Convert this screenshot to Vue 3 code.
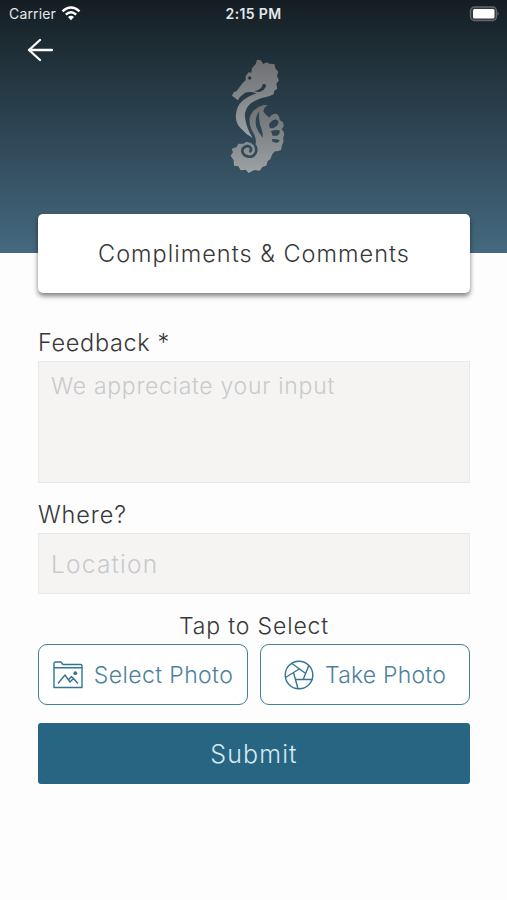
<script setup>
const fins = [
  'M162 222 Q178 203 188 211 Q195 221 181 231 Q171 237 164 233Z',
  'M168 243 Q185 238 193 241 Q198 251 186 257 L173 257Z',
  'M172 267 Q187 266 194 271 Q193 280 181 278 L171 274Z',
]
</script>

<template>
  <main class="screen">
    <header class="hero">
      <div class="status">
        <div class="carrier">
          <span>Carrier</span>
          <svg class="wifi" viewBox="0 0 20 15" aria-hidden="true">
            <path d="M1.5 5.3Q10-2.3 18.5 5.3M4.8 8.7Q10 4 15.2 8.7" />
            <path class="dot" d="M7 11Q10 8.5 13 11L10 14.2Z" />
          </svg>
        </div>
        <span class="clock">2:15 PM</span>
        <svg class="battery" viewBox="0 0 32 16" aria-hidden="true">
          <rect x="2.5" y="1" width="26" height="13.5" rx="4" class="shell" />
          <rect x="5" y="3" width="21.5" height="9.5" rx="1.5" fill="#fff" />
          <path d="M29.5 5.5Q32 7.7 29.5 10Z" fill="#60686b" />
        </svg>
      </div>
      <svg class="back" viewBox="0 0 26 24" aria-label="Back">
        <path d="M13 2L2 12L13 22M2 12H25" />
      </svg>
      <svg class="logo" viewBox="0 0 255 390" aria-hidden="true">
        <defs>
          <linearGradient id="metal" x1="0" y1="0" x2="0" y2="1">
            <stop offset="0" stop-color="#6d6f71" />
            <stop offset="1" stop-color="#9da2a5" />
          </linearGradient>
          <mask id="cuts" maskUnits="userSpaceOnUse" x="0" y="0" width="255" height="390">
            <rect width="255" height="390" fill="#fff" />
            <circle cx="104" cy="84" r="5" />
            <path d="M143 103Q153 99 153 109Q148 123 132 126Q124 126 118 124Q130 121 137 115Q142 111 143 103Z" />
            <path d="M132 184Q117 207 124 232Q130 248 143 263Q145 247 135 224Q131 205 132 184Z" />
            <path v-for="fin in fins" :key="fin" :d="fin" />
            <path class="spiral" d="M121 288C129 306 118 322 101 320C82 318 76 299 89 291C101 284 113 294 106 304" />
          </mask>
        </defs>
        <g fill="url(#metal)" mask="url(#cuts)">
          <path d="M122 42L126 29L138 31L144 42L155 37L162 41L178 42L181 55L190 66L186 78L192 91L184 101L187 116L178 122L176 133L162 139Q126 145 105 162Q88 179 90 202Q94 235 113 264Q93 254 77 235Q60 217 63 192Q66 167 82 153Q99 138 125 130Q104 122 89 129L74 142L69 151L51 137L56 127L65 123L83 99L92 91L92 78L101 67L109 68L111 55Z" />
          <path d="M158 165Q148 171 145 184Q150 194 163 203Q173 188 186 192Q196 200 194 211Q207 214 206 229L200 238Q213 251 204 263Q208 275 201 285L198 300L188 304L180 304L172 312L166 328L158 333L154 347L143 350L134 362L118 360L101 369L92 359L77 361L70 349L57 347L56 331L47 317L54 307L50 296L65 291L70 281L85 281L94 275L108 279L119 289Q127 275 118 254Q101 228 104 203Q113 174 146 165Z" />
        </g>
      </svg>
    </header>

    <section class="title-card"><h1>Compliments &amp; Comments</h1></section>

    <form class="form" @submit.prevent>
      <label class="label feedback-label" for="feedback"><span>Feedback *</span></label>
      <textarea id="feedback" class="field feedback" placeholder="We appreciate your input"></textarea>
      <label class="label where-label" for="location"><span>Where?</span></label>
      <input id="location" class="field location" placeholder="Location" />
      <p class="hint">Tap to Select</p>
      <div class="photo-actions">
        <button type="button" class="photo select">
          <svg class="folder" viewBox="0 0 30 28" aria-hidden="true">
            <path d="M1 26.5V2.5Q1 1 2.5 1H8L10 3.5H28Q29 3.5 29 5V26.5ZM1 6.7H29M5 22.5L12 14L17 21L20.5 17.5L25 22.5M15.5 18.8L18.5 15.5L20.5 17.5" />
            <circle cx="22.3" cy="12.2" r="1.9" />
          </svg>
          <span>Select Photo</span>
        </button>
        <button type="button" class="photo take">
          <svg class="aperture" viewBox="0 0 30 30" aria-hidden="true">
            <circle cx="15" cy="15" r="13.8" />
            <path d="M8 3.5L21 13M25 5L19 20M28.5 19.5H11.5M14 28.8L9.5 12.5M1.5 17.5L16 8.5" />
          </svg>
          <span>Take Photo</span>
        </button>
      </div>
      <button class="submit" type="submit">Submit</button>
    </form>
  </main>
</template>

<style>
body { background: #fdfdfd; }
</style>

<style scoped>
* { box-sizing: border-box; }
.screen {
  width: 507px;
  height: 900px;
  overflow: hidden;
  background: #fdfdfd;
  color: #383838;
  font-family: Inter, "Liberation Sans", sans-serif;
}
.hero {
  height: 253px;
  display: grid;
  grid-template-columns: 100%;
  grid-template-rows: 28px 31px 194px;
  background: linear-gradient(#141d22, #1c2a32 15%, #456980);
}
.status {
  display: grid;
  grid-template-columns: 1fr auto 1fr;
  align-items: center;
  padding: 0 7px 1px 9px;
  color: #e4e8ea;
  font-size: 14px;
}
.carrier { display: flex; gap: 5px; align-items: center; letter-spacing: 0.15px; }
.wifi { width: 20px; height: 15px; fill: none; stroke: #fff; stroke-width: 2.4; }
.wifi .dot { fill: #fff; stroke: none; }
.clock { margin-right: 2px; font-size: 14px; font-weight: 600; letter-spacing: 0.35px; }
.battery { width: 32px; height: 16px; justify-self: end; }
.shell { fill: #30383c; stroke: #60686b; stroke-width: 1.4; }
.back {
  width: 26px;
  height: 24px;
  margin: 10px 0 0 27px;
  fill: none;
  stroke: #fff;
  stroke-width: 2.3;
  stroke-linecap: round;
  stroke-linejoin: round;
}
.logo { width: 85px; height: 130px; margin: -9px 0 0 215px; }
.spiral { fill: none; stroke: #000; stroke-width: 8; stroke-linecap: round; }
.title-card {
  position: relative;
  height: 79px;
  margin: -39px 37px 0 38px;
  display: flex;
  align-items: center;
  justify-content: center;
  background: #fff;
  border-radius: 5px;
  box-shadow: 0 3px 5px rgba(0, 0, 0, 0.5);
}
h1 { margin: 0; font-size: 23.5px; line-height: 30px; font-weight: 300; letter-spacing: 1px; white-space: nowrap; }
.form { display: flex; flex-direction: column; padding: 35px 37px 0 38px; }
.label { display: block; height: 33px; font-size: 23.5px; line-height: 30px; font-weight: 300; }
.feedback-label { letter-spacing: 0.65px; }
.where-label { margin-top: 17px; letter-spacing: 0.9px; }
.field {
  display: block;
  width: 100%;
  margin: 0;
  padding: 10px 12px;
  resize: none;
  outline: none;
  border: 1px solid #e9e9e9;
  border-radius: 0;
  background: #f5f4f3;
  color: #383838;
  font: 300 23px/28px Inter, sans-serif;
}
.field::placeholder { color: #c9cacc; opacity: 1; }
.feedback { height: 122px; letter-spacing: 0.7px; }
.location { height: 61px; font-size: 24.5px; letter-spacing: 1.2px; }
.hint { height: 30px; margin: 17px 0 3px; text-align: center; font-size: 23px; line-height: 30px; font-weight: 300; letter-spacing: 0.85px; }
.photo-actions { display: grid; grid-template-columns: 1fr 1fr; gap: 12px; }
button { font-family: inherit; white-space: nowrap; }
.photo {
  display: flex;
  align-items: center;
  justify-content: center;
  height: 61px;
  padding: 0;
  border: 1.5px solid #447f9b;
  border-radius: 9px;
  background: #fff;
  color: #4c829d;
  font-size: 23px;
  font-weight: 300;
}
.photo svg { fill: none; stroke: #347490; stroke-width: 1.4; stroke-linejoin: round; }
.photo .folder { width: 30px; height: 28px; margin-right: 11px; }
.photo .folder circle { fill: #347490; stroke: none; }
.photo .aperture { width: 30px; height: 30px; margin-right: 11px; }
.select span { letter-spacing: 0.4px; }
.take span { letter-spacing: 0.2px; }
.submit {
  height: 61px;
  margin-top: 18px;
  padding: 0;
  border: 0;
  border-radius: 3px;
  background: #276582;
  color: #d4e9f3;
  font-size: 25px;
  font-weight: 300;
  letter-spacing: 1.1px;
}
</style>
